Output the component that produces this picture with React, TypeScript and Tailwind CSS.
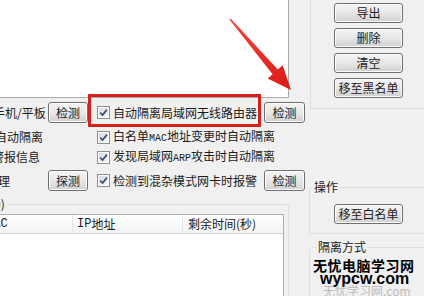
import clsx from "clsx";
import { ReactNode } from "react";

// win7 style push button
const Btn = ({ children, className }: { children: ReactNode; className?: string }) => (
  <button
    className={clsx(
      "flex shrink-0 items-center justify-center rounded-[3px] border border-[#707070] bg-linear-to-b from-[#f5f5f5] via-[#e7e7e7] to-[#d0d0d0] text-[12px] leading-none text-[#1a1a1a] shadow-[inset_0_0_0_1px_#fbfbfb]",
      className
    )}
  >
    {children}
  </button>
);

const Check = () => (
  <span className="flex h-[13px] w-[13px] shrink-0 items-center justify-center border border-[#8e8f8f] bg-white">
    <span className="flex h-[9px] w-[9px] items-center justify-center bg-linear-to-br from-[#d8dadd] to-[#f6f6f6]">
      <svg width="9" height="9" viewBox="0 0 9 9">
        <path d="M1.2 4.6 L3.6 7 L7.9 1.6" stroke="#3b4d7a" strokeWidth="1.7" fill="none" />
      </svg>
    </span>
  </span>
);

const Latin = ({ children }: { children: ReactNode }) => (
  <span className="font-['Liberation_Mono',monospace] text-[10px]">{children}</span>
);

const Row = ({
  label,
  labelClass,
  leftBtn,
  text,
  rightBtn,
  className,
}: {
  label: string;
  labelClass: string;
  leftBtn?: string;
  text: ReactNode;
  rightBtn?: string;
  className?: string;
}) => (
  <div className={clsx("flex items-center", className)}>
    <div className="flex h-full w-[97px] shrink-0 items-center">
      <span className={clsx("flex-1 whitespace-nowrap", labelClass)}>{label}</span>
      {leftBtn && <Btn className="mr-[9px] h-[21px] w-[40px]">{leftBtn}</Btn>}
    </div>
    <div className="flex w-[167px] shrink-0 items-center gap-[3px]">
      <Check />
      <span className="whitespace-nowrap">{text}</span>
    </div>
    {rightBtn && <Btn className="h-[21px] w-[41px]">{rightBtn}</Btn>}
  </div>
);

export default function App() {
  return (
    <div className="relative h-[296px] w-[424px] overflow-hidden bg-[#f0f0f0] font-['Noto_Sans_CJK_SC',sans-serif] text-[12px] leading-[14px] text-[#1b1b1b]">
      <div className="flex">
        {/* left side */}
        <div className="w-[308px] shrink-0">
          <div className="h-[98px] w-[289px] border-r border-b border-[#a9a9a9] bg-white" />

          <div className="pt-[4px]">
            <Row
              className="h-[21px]"
              label="手机/平板"
              labelClass="-ml-[7px]"
              leftBtn="检测"
              text="自动隔离局域网无线路由器"
              rightBtn="检测"
            />
            <Row
              className="mt-[4px] h-[20px]"
              label="自动隔离"
              labelClass="-ml-[5px]"
              text={
                <>
                  白名单<Latin>MAC</Latin>地址变更时自动隔离
                </>
              }
            />
            <Row
              className="h-[20px]"
              label="警报信息"
              labelClass="-ml-[8px]"
              text={
                <>
                  发现局域网<Latin>ARP</Latin>攻击时自动隔离
                </>
              }
            />
            <Row
              className="mt-[3px] h-[21px]"
              label="处理"
              labelClass="-ml-[14px]"
              leftBtn="探测"
              text="检测到混杂模式网卡时报警"
              rightBtn="检测"
            />
          </div>

          <fieldset className="-ml-[30px] mt-[7px] h-[130px] w-[319px] rounded-[3px] border border-[#d5dfe5]">
            <legend className="ml-[19px] pr-[3px] leading-[12px]">(0)</legend>
            <div className="mt-[4px] mr-[4px] ml-[9px] h-[110px] border border-[#abb0b4] bg-white">
              <div className="flex h-[19px] border-b border-[#d5d5d5] bg-linear-to-b from-white to-[#f2f3f5]">
                <div className="flex w-[92px] items-center overflow-hidden border-r border-[#e3e4e6] pl-[5px]">
                  <span className="font-['Liberation_Mono',monospace]">MAC</span>
                </div>
                <div className="flex w-[110px] items-center border-r border-[#e3e4e6] pl-[4px]">
                  <span className="font-['Liberation_Mono',monospace]">IP</span>地址
                </div>
                <div className="flex flex-1 items-center pl-[5px]">剩余时间(秒)</div>
              </div>
            </div>
          </fieldset>
        </div>

        {/* right side */}
        <div className="w-[116px] shrink-0">
          <div className="ml-[2px] flex h-[109px] flex-col gap-[5px] rounded-bl-[3px] border-b border-l border-[#d5dfe5] pt-[3px] pl-[23px]">
            <Btn className="h-[20px] w-[69px]">导出</Btn>
            <Btn className="h-[20px] w-[69px]">删除</Btn>
            <Btn className="h-[20px] w-[69px]">清空</Btn>
            <Btn className="h-[20px] w-[69px]">移至黑名单</Btn>
          </div>

          <fieldset className="mt-[71px] ml-[1px] w-[130px] rounded-[3px] border border-[#d5dfe5]">
            <legend className="ml-[3px] px-[1px] leading-[14px]">操作</legend>
            <div className="pt-[10px] pb-[9px] pl-[24px]">
              <Btn className="h-[20px] w-[69px]">移至白名单</Btn>
            </div>
          </fieldset>

          <fieldset className="mt-[6px] ml-[1px] h-[80px] w-[130px] rounded-[3px] border border-[#d5dfe5]">
            <legend className="ml-[7px] px-[1px] leading-[14px]">隔离方式</legend>
            <div className="mt-[3px] ml-[3px] whitespace-nowrap">
              <div className="text-[14px] leading-[16px] font-bold tracking-[0.5px] text-black">
                无忧电脑学习网
              </div>
              <div className="-mt-[2px] ml-[7px] font-['Liberation_Sans',sans-serif] text-[16px] leading-[16px] font-bold text-black">
                wypcw.com
              </div>
              <div className="-mt-[2px] ml-[10px] text-[12px] leading-[12px] text-[#bdbdbd]">
                无忧学习网.com
              </div>
            </div>
          </fieldset>
        </div>
      </div>

      {/* red annotation */}
      <div className="pointer-events-none absolute top-[94px] left-[88px] h-[33px] w-[173px] border-[3px] border-[#d3221c]" />
      <svg
        className="pointer-events-none absolute top-0 left-0"
        width="424"
        height="296"
        viewBox="0 0 424 296"
      >
        <defs>
          <linearGradient id="arrow" x1="0" y1="0" x2="1" y2="1">
            <stop offset="0" stopColor="#f0473d" />
            <stop offset="1" stopColor="#dc1a14" />
          </linearGradient>
        </defs>
        <polygon
          points="229.4,19.5 230.6,18.5 277.8,69.6 282.7,65.3 291,90 267.7,78.5 272.6,74.2"
          fill="url(#arrow)"
        />
      </svg>
    </div>
  );
}
